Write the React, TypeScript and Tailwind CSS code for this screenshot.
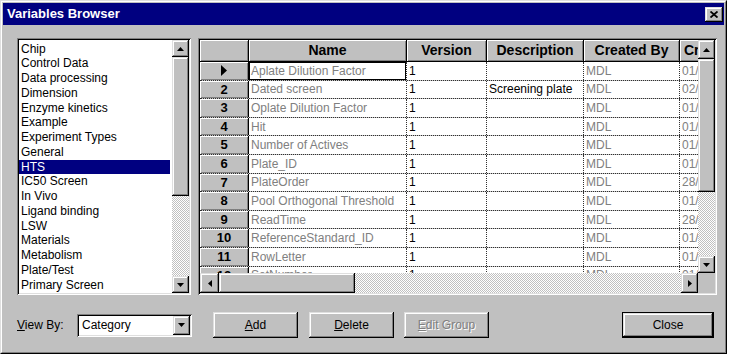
import React from "react";

const raised =
  "bg-[#c0c0c0] shadow-[inset_-1px_-1px_#000,inset_1px_1px_#dfdfdf,inset_-2px_-2px_#808080,inset_2px_2px_#fff]";
const sunken =
  "shadow-[inset_1px_1px_#808080,inset_-1px_-1px_#fff,inset_2px_2px_#000,inset_-2px_-2px_#dfdfdf]";
const thin = "bg-[#c0c0c0] shadow-[inset_1px_1px_#fff,inset_-1px_-1px_#808080]";
const track =
  "bg-[repeating-conic-gradient(#fff_0_25%,#c0c0c0_0_50%)] bg-[length:2px_2px]";

const Tri = ({ dir }: { dir: "up" | "down" | "left" | "right" }) => {
  const pts = {
    up: "3.5,0 7,4 0,4",
    down: "0,0 7,0 3.5,4",
    left: "4,0 4,7 0,3.5",
    right: "0,0 0,7 4,3.5",
  }[dir];
  const v = dir === "up" || dir === "down";
  return (
    <svg width={v ? 7 : 4} height={v ? 4 : 7} viewBox={v ? "0 0 7 4" : "0 0 4 7"}>
      <polygon points={pts} fill="#000" />
    </svg>
  );
};

const Arrow = ({ dir, cls }: { dir: "up" | "down" | "left" | "right"; cls: string }) => (
  <div className={`${raised} ${cls} flex shrink-0 items-center justify-center`}>
    <Tri dir={dir} />
  </div>
);

const categories = [
  "Chip",
  "Control Data",
  "Data processing",
  "Dimension",
  "Enzyme kinetics",
  "Example",
  "Experiment Types",
  "General",
  "HTS",
  "IC50 Screen",
  "In Vivo",
  "Ligand binding",
  "LSW",
  "Materials",
  "Metabolism",
  "Plate/Test",
  "Primary Screen",
  "Project",
];

const rows = [
  { name: "Aplate Dilution Factor", desc: "", date: "01/12/1999" },
  { name: "Dated screen", desc: "Screening plate", date: "02/03/2000" },
  { name: "Oplate Dilution Factor", desc: "", date: "01/12/1999" },
  { name: "Hit", desc: "", date: "01/12/1999" },
  { name: "Number of Actives", desc: "", date: "01/12/1999" },
  { name: "Plate_ID", desc: "", date: "01/12/1999" },
  { name: "PlateOrder", desc: "", date: "28/02/2000" },
  { name: "Pool Orthogonal Threshold", desc: "", date: "01/12/1999" },
  { name: "ReadTime", desc: "", date: "28/02/2000" },
  { name: "ReferenceStandard_ID", desc: "", date: "01/12/1999" },
  { name: "RowLetter", desc: "", date: "01/12/1999" },
  { name: "SetNumber", desc: "", date: "01/12/1999" },
];

const cols = [
  { label: "Name", w: "w-[158px]" },
  { label: "Version", w: "w-[80px]" },
  { label: "Description", w: "w-[97px]" },
  { label: "Created By", w: "w-[96px]" },
];

const cell =
  "h-full shrink-0 bg-white border-r border-dotted border-[#303030] pl-[2px] flex items-center overflow-hidden whitespace-nowrap";

export default function App() {
  return (
    <div className="min-h-screen bg-white font-['Liberation_Sans',Arial,sans-serif] text-[12px] text-black">
      <div className="w-[727px] h-[354px] border border-t-[#dfdfdf] border-l-[#dfdfdf] border-r-black border-b-black">
        <div className="h-full border border-t-white border-l-white border-r-[#808080] border-b-[#808080] bg-[#c0c0c0] p-px flex flex-col">
          {/* title bar */}
          <div className="h-[22px] bg-[#000080] flex items-center pl-[4px] pr-[1px] shrink-0">
            <span className="text-white font-bold text-[13px] flex-1">Variables Browser</span>
            <div className={`${raised} w-[18px] h-[15px] flex items-center justify-center`}>
              <svg width="8" height="7" viewBox="0 0 8 7">
                <path d="M0.5 0.5 L7.5 6.5 M7.5 0.5 L0.5 6.5" stroke="#000" strokeWidth="1.8" />
              </svg>
            </div>
          </div>

          {/* body */}
          <div className="flex-1 flex flex-col pt-[13px] pl-[14px] pr-[7px]">
            <div className="flex gap-[7px] h-[257px]">
              {/* category list */}
              <div className={`w-[174px] h-full bg-white p-[2px] flex ${sunken}`}>
                <div className="flex-1 overflow-hidden pt-[1.5px]">
                  {categories.map((c) => (
                    <div
                      key={c}
                      className={`h-[14.75px] leading-[14.75px] pl-[2px] whitespace-nowrap ${
                        c === "HTS" ? "bg-[#000080] text-white mr-[2px]" : ""
                      }`}
                    >
                      {c}
                    </div>
                  ))}
                </div>
                <div className="w-[17px] flex flex-col">
                  <Arrow dir="up" cls="h-[17px]" />
                  <div className={`${raised} h-[139px] shrink-0`} />
                  <div className={`flex-1 ${track}`} />
                  <Arrow dir="down" cls="h-[17px]" />
                </div>
              </div>

              {/* grid */}
              <div className={`w-[519px] h-full p-[2px] flex flex-col ${sunken}`}>
                <div className="flex h-[233px]">
                  <div className="w-[498px] overflow-hidden flex flex-col">
                    <div className="flex h-[22px] shrink-0">
                      <div className={`${thin} w-[49px] shrink-0 border-r border-b border-black`} />
                      {cols.map((c) => (
                        <div
                          key={c.label}
                          className={`${thin} ${c.w} shrink-0 border-r border-b border-black flex items-center justify-center font-bold text-[14px]`}
                        >
                          {c.label}
                        </div>
                      ))}
                      <div
                        className={`${thin} w-[90px] shrink-0 border-r border-b border-black flex items-center pl-[4px] font-bold text-[14px] whitespace-nowrap`}
                      >
                        Created On
                      </div>
                    </div>
                    {rows.map((r, i) => (
                      <div key={i} className="flex h-[18.6px] shrink-0 border-b border-dotted border-[#303030]">
                        <div
                          className={`${thin} w-[49px] shrink-0 h-full border-r border-black flex items-center justify-center font-bold text-[13px]`}
                        >
                          {i === 0 ? (
                            <svg width="6" height="11" viewBox="0 0 6 11">
                              <polygon points="0,0 6,5.5 0,11" fill="#000" />
                            </svg>
                          ) : (
                            i + 1
                          )}
                        </div>
                        <div
                          className={`${cell} w-[158px] text-[#808080] ${
                            i === 0 ? "shadow-[inset_0_0_0_1px_#000]" : ""
                          }`}
                        >
                          {r.name}
                        </div>
                        <div className={`${cell} w-[80px]`}>1</div>
                        <div className={`${cell} w-[97px]`}>{r.desc}</div>
                        <div className={`${cell} w-[96px] text-[#808080]`}>MDL</div>
                        <div className={`${cell} w-[90px] text-[#808080]`}>{r.date}</div>
                      </div>
                    ))}
                  </div>
                  <div className="w-[17px] flex flex-col">
                    <Arrow dir="up" cls="h-[19px]" />
                    <div className={`${raised} h-[133px] shrink-0`} />
                    <div className={`flex-1 ${track}`} />
                    <Arrow dir="down" cls="h-[17px]" />
                  </div>
                </div>
                <div className="flex h-[20px]">
                  <div className="w-[498px] flex">
                    <Arrow dir="left" cls="w-[19px]" />
                    <div className={`${raised} w-[136px] shrink-0`} />
                    <div className={`flex-1 ${track}`} />
                    <Arrow dir="right" cls="w-[17px]" />
                  </div>
                  <div className="flex-1 bg-[#c0c0c0]" />
                </div>
              </div>
            </div>

            {/* bottom controls */}
            <div className="flex items-center h-[26px] mt-[17px]">
              <span className="w-[60px]">
                <span className="underline">V</span>iew By:
              </span>
              <div className={`w-[115px] h-[23px] bg-white p-[2px] flex ${sunken}`}>
                <div className="flex-1 flex items-center pl-[3px]">Category</div>
                <Arrow dir="down" cls="w-[17px]" />
              </div>
              <div className={`${raised} ml-[21px] w-[85px] h-[26px] flex items-center justify-center`}>
                <span>
                  <span className="underline">A</span>dd
                </span>
              </div>
              <div className={`${raised} ml-[11px] w-[85px] h-[26px] flex items-center justify-center`}>
                <span>
                  <span className="underline">D</span>elete
                </span>
              </div>
              <div
                className={`${raised} ml-[10px] w-[85px] h-[26px] flex items-center justify-center text-[#808080] [text-shadow:1px_1px_#fff]`}
              >
                <span>
                  <span className="underline">E</span>dit Group
                </span>
              </div>
              <div className="ml-auto mr-[3px] w-[92px] h-[26px] border border-black">
                <div className={`${raised} w-full h-full flex items-center justify-center`}>Close</div>
              </div>
            </div>
          </div>
        </div>
      </div>
    </div>
  );
}
